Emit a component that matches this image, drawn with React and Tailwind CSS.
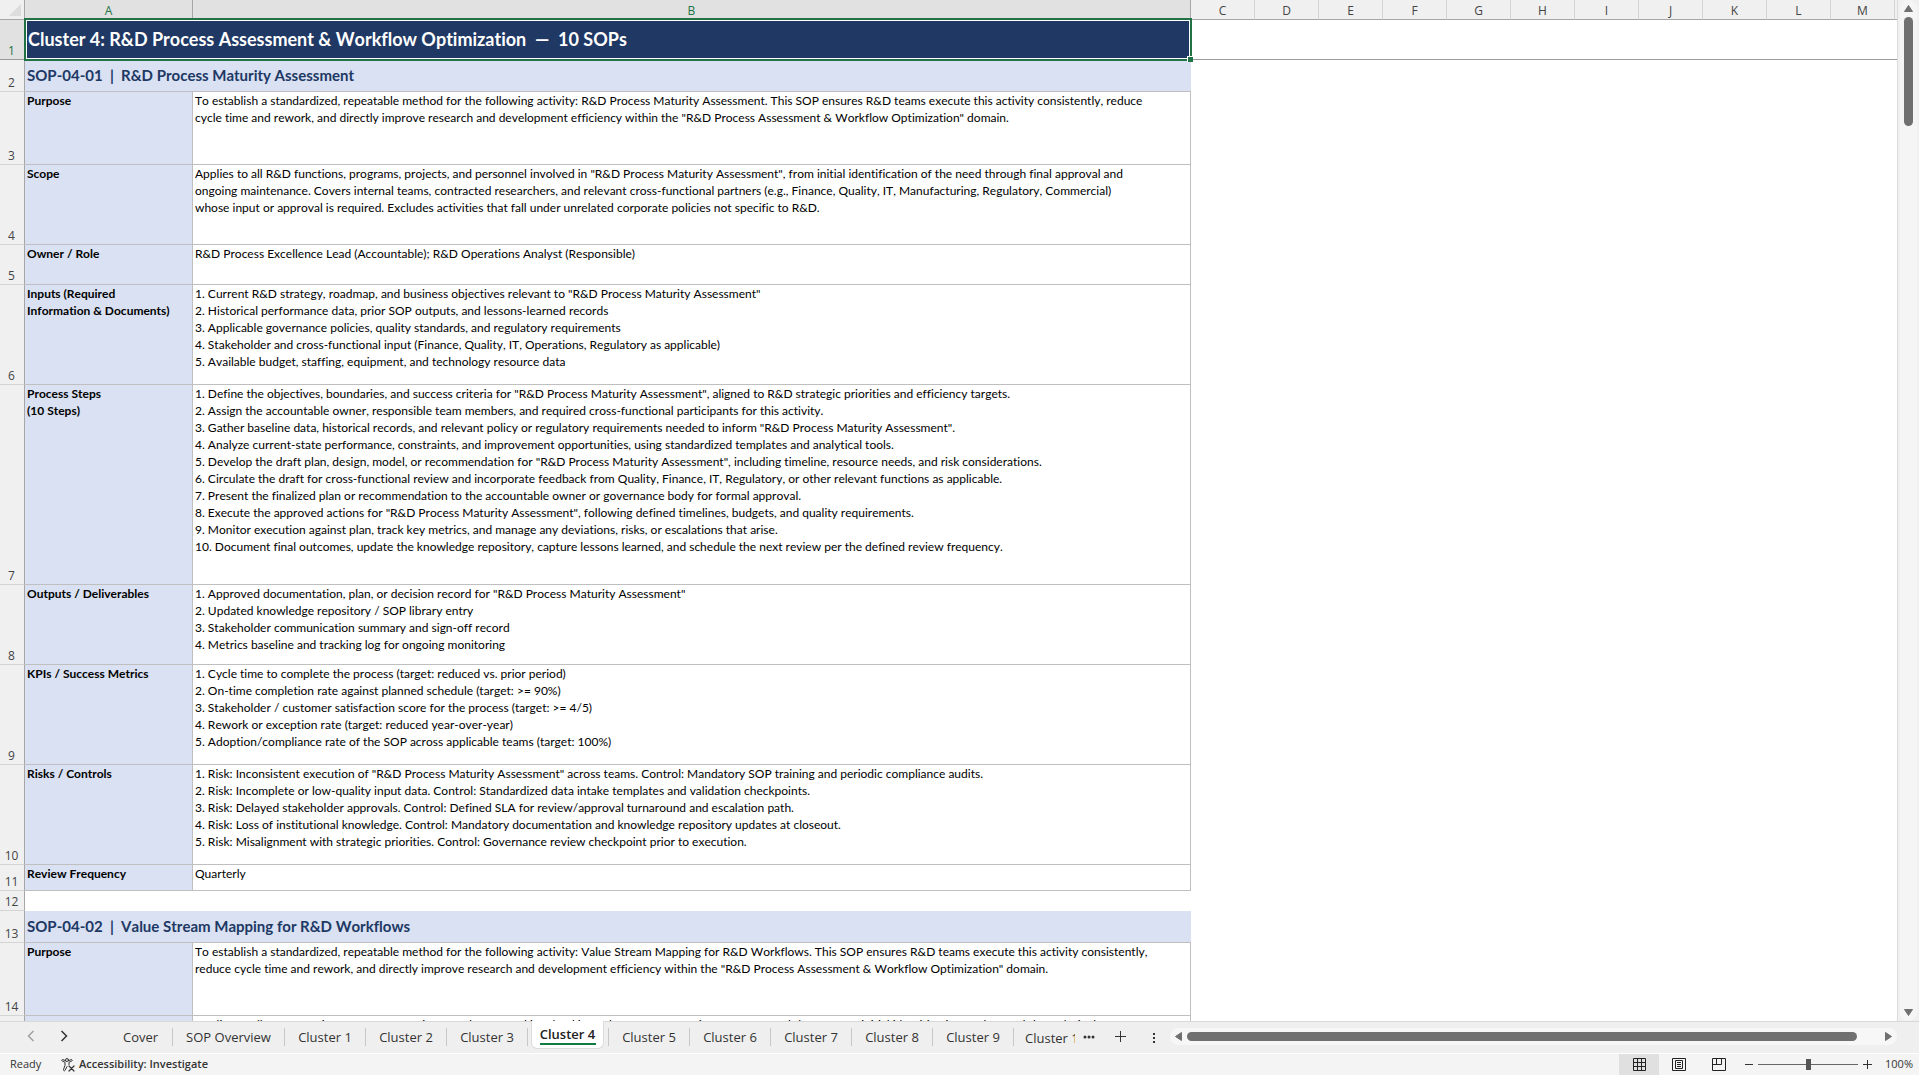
import { useState } from "react";

const extraColumns = ["C", "D", "E", "F", "G", "H", "I", "J", "K", "L", "M"];

const rows = [
  { type: "title", height: "h-10", text: "Cluster 4: R&D Process Assessment & Workflow Optimization  —  10 SOPs" },
  { type: "section", height: "h-8", text: "SOP-04-01  |  R&D Process Maturity Assessment" },
  {
    height: "h-[73px]",
    label: ["Purpose"],
    lines: [
      "To establish a standardized, repeatable method for the following activity: R&D Process Maturity Assessment. This SOP ensures R&D teams execute this activity consistently, reduce",
      'cycle time and rework, and directly improve research and development efficiency within the "R&D Process Assessment & Workflow Optimization" domain.',
    ],
  },
  {
    height: "h-20",
    label: ["Scope"],
    lines: [
      'Applies to all R&D functions, programs, projects, and personnel involved in "R&D Process Maturity Assessment", from initial identification of the need through final approval and',
      "ongoing maintenance. Covers internal teams, contracted researchers, and relevant cross-functional partners (e.g., Finance, Quality, IT, Manufacturing, Regulatory, Commercial)",
      "whose input or approval is required. Excludes activities that fall under unrelated corporate policies not specific to R&D.",
    ],
  },
  {
    height: "h-10",
    label: ["Owner / Role"],
    lines: ["R&D Process Excellence Lead (Accountable); R&D Operations Analyst (Responsible)"],
  },
  {
    height: "h-25",
    label: ["Inputs (Required", "Information & Documents)"],
    lines: [
      '1. Current R&D strategy, roadmap, and business objectives relevant to "R&D Process Maturity Assessment"',
      "2. Historical performance data, prior SOP outputs, and lessons-learned records",
      "3. Applicable governance policies, quality standards, and regulatory requirements",
      "4. Stakeholder and cross-functional input (Finance, Quality, IT, Operations, Regulatory as applicable)",
      "5. Available budget, staffing, equipment, and technology resource data",
    ],
  },
  {
    height: "h-50",
    label: ["Process Steps", "(10 Steps)"],
    lines: [
      '1. Define the objectives, boundaries, and success criteria for "R&D Process Maturity Assessment", aligned to R&D strategic priorities and efficiency targets.',
      "2. Assign the accountable owner, responsible team members, and required cross-functional participants for this activity.",
      '3. Gather baseline data, historical records, and relevant policy or regulatory requirements needed to inform "R&D Process Maturity Assessment".',
      "4. Analyze current-state performance, constraints, and improvement opportunities, using standardized templates and analytical tools.",
      '5. Develop the draft plan, design, model, or recommendation for "R&D Process Maturity Assessment", including timeline, resource needs, and risk considerations.',
      "6. Circulate the draft for cross-functional review and incorporate feedback from Quality, Finance, IT, Regulatory, or other relevant functions as applicable.",
      "7. Present the finalized plan or recommendation to the accountable owner or governance body for formal approval.",
      '8. Execute the approved actions for "R&D Process Maturity Assessment", following defined timelines, budgets, and quality requirements.',
      "9. Monitor execution against plan, track key metrics, and manage any deviations, risks, or escalations that arise.",
      "10. Document final outcomes, update the knowledge repository, capture lessons learned, and schedule the next review per the defined review frequency.",
    ],
  },
  {
    height: "h-20",
    label: ["Outputs / Deliverables"],
    lines: [
      '1. Approved documentation, plan, or decision record for "R&D Process Maturity Assessment"',
      "2. Updated knowledge repository / SOP library entry",
      "3. Stakeholder communication summary and sign-off record",
      "4. Metrics baseline and tracking log for ongoing monitoring",
    ],
  },
  {
    height: "h-25",
    label: ["KPIs / Success Metrics"],
    lines: [
      "1. Cycle time to complete the process (target: reduced vs. prior period)",
      "2. On-time completion rate against planned schedule (target: >= 90%)",
      "3. Stakeholder / customer satisfaction score for the process (target: >= 4/5)",
      "4. Rework or exception rate (target: reduced year-over-year)",
      "5. Adoption/compliance rate of the SOP across applicable teams (target: 100%)",
    ],
  },
  {
    height: "h-25",
    label: ["Risks / Controls"],
    lines: [
      '1. Risk: Inconsistent execution of "R&D Process Maturity Assessment" across teams. Control: Mandatory SOP training and periodic compliance audits.',
      "2. Risk: Incomplete or low-quality input data. Control: Standardized data intake templates and validation checkpoints.",
      "3. Risk: Delayed stakeholder approvals. Control: Defined SLA for review/approval turnaround and escalation path.",
      "4. Risk: Loss of institutional knowledge. Control: Mandatory documentation and knowledge repository updates at closeout.",
      "5. Risk: Misalignment with strategic priorities. Control: Governance review checkpoint prior to execution.",
    ],
  },
  { height: "h-[26px]", label: ["Review Frequency"], lines: ["Quarterly"] },
  { type: "blank", height: "h-5" },
  { type: "section", height: "h-8", text: "SOP-04-02  |  Value Stream Mapping for R&D Workflows" },
  {
    height: "h-[73px]",
    label: ["Purpose"],
    lines: [
      "To establish a standardized, repeatable method for the following activity: Value Stream Mapping for R&D Workflows. This SOP ensures R&D teams execute this activity consistently,",
      'reduce cycle time and rework, and directly improve research and development efficiency within the "R&D Process Assessment & Workflow Optimization" domain.',
    ],
  },
  {
    height: "h-20",
    label: ["Scope"],
    lines: [
      'Applies to all R&D functions, programs, projects, and personnel involved in "Value Stream Mapping for R&D Workflows", from initial identification of the need through final',
    ],
  },
];

const sheets = [
  "Cluster 1", "Cluster 2", "Cluster 3", "Cluster 4", "Cluster 5",
  "Cluster 6", "Cluster 7", "Cluster 8", "Cluster 9",
];

function Lines({ lines }) {
  return lines.map((line) => (
    <div key={line} className="whitespace-nowrap">{line}</div>
  ));
}

function RowHeader({ number, active }) {
  return (
    <th
      scope="row"
      className={`border-r border-r-[#a6a6a6] border-b p-0 pr-px text-center align-bottom font-['Open_Sans',sans-serif] text-xs leading-[17px] font-normal ${
        active ? "border-b-[#9a9a9a] bg-[#e1e1e1] text-[#217346]" : "border-b-[#d4d4d4] bg-[#f0f0f0] text-[#444]"
      }`}
    >
      {number}
    </th>
  );
}

function Row({ row, number }) {
  if (row.type === "title") {
    return (
      <tr className={row.height}>
        <RowHeader number={number} active />
        <td colSpan={2} className="relative border-b border-[#9a9a9a] bg-[#203864] p-0 pt-0.5 pl-[3px] align-middle">
          <span className="text-[18px] font-bold whitespace-pre text-white">{row.text}</span>
          {/* selected cell outline */}
          <div className="absolute -top-0.5 -right-px -bottom-0.5 -left-px z-10 border-2 border-[#217346]">
            <div className="h-full border border-white" />
            <div className="absolute -right-[3px] -bottom-[3px] size-1.5 border-t border-l border-white bg-[#217346]" />
          </div>
        </td>
        <td colSpan={12} className="border-b border-[#9a9a9a] p-0" />
      </tr>
    );
  }

  if (row.type === "section") {
    return (
      <tr className={row.height}>
        <RowHeader number={number} />
        <td colSpan={2} className="border-b border-[#bfbfbf] bg-[#d9e1f2] p-0 pl-0.5 align-middle">
          <span className="text-[15px] font-bold whitespace-pre text-[#203864]">{row.text}</span>
        </td>
        <td colSpan={12} className="p-0" />
      </tr>
    );
  }

  if (row.type === "blank") {
    return (
      <tr className={row.height}>
        <RowHeader number={number} />
        <td colSpan={14} className="p-0" />
      </tr>
    );
  }

  return (
    <tr className={row.height}>
      <RowHeader number={number} />
      <td className="border-r border-b border-[#bfbfbf] bg-[#d9e1f2] p-0 pl-0.5 align-top font-bold">
        <Lines lines={row.label} />
      </td>
      <td className="border-r border-b border-[#bfbfbf] p-0 pl-0.5 align-top">
        <Lines lines={row.lines} />
      </td>
      <td colSpan={12} className="p-0" />
    </tr>
  );
}

function Sheet() {
  return (
    <table className="w-full table-fixed border-separate border-spacing-0 font-[Lato,sans-serif] text-xs leading-[17px] text-black [font-kerning:none] [font-variant-ligatures:none]">
      <colgroup>
        <col className="w-[25px]" />
        <col className="w-[168px]" />
        <col className="w-[998px]" />
        {extraColumns.map((c) => (
          <col key={c} className="w-16" />
        ))}
        <col />
      </colgroup>
      <thead className="font-['Open_Sans',sans-serif] text-[#444]">
        <tr className="h-5">
          <th className="border-r border-b border-[#a6a6a6] bg-[#f0f0f0] p-0">
            <svg className="ml-auto block h-3 w-4" viewBox="0 0 16 12" aria-hidden="true">
              <path d="M13 0v12H1z" fill="#dcdcdc" />
            </svg>
          </th>
          {["A", "B"].map((c) => (
            <th key={c} scope="col" className="border-r border-b border-[#a6a6a6] bg-[#e1e1e1] p-0 pt-0.5 font-normal text-[#217346]">
              {c}
            </th>
          ))}
          {extraColumns.map((c) => (
            <th key={c} scope="col" className="border-r border-b border-r-[#d4d4d4] border-b-[#a6a6a6] bg-[#f0f0f0] p-0 pt-0.5 font-normal">
              {c}
            </th>
          ))}
          <td className="border-b border-[#a6a6a6] bg-[#f0f0f0] p-0" />
        </tr>
      </thead>
      <tbody>
        {rows.map((row, i) => (
          <Row key={i} row={row} number={i + 1} />
        ))}
      </tbody>
    </table>
  );
}

function VerticalScrollbar() {
  return (
    <div className="flex w-[22px] shrink-0 justify-center border-l border-[#dcdcdc] bg-[#f0f0f0]">
      <div className="flex w-[17px] flex-col items-center rounded-full bg-[#f5f5f5] py-[5px]">
        <button aria-label="Scroll up">
          <svg className="block h-[7px] w-[9px]" viewBox="0 0 9 7">
            <path d="M4.500 .5 8.500 6.500H.5z" fill="#707070" stroke="#707070" strokeLinejoin="round" />
          </svg>
        </button>
        <div className="mt-[5px] h-[109px] w-[9px] rounded-full bg-[#707070]" />
        <button aria-label="Scroll down" className="mt-auto">
          <svg className="block h-[7px] w-[9px]" viewBox="0 0 9 7">
            <path d="M4.500 6.500 .5 .5h8z" fill="#707070" stroke="#707070" strokeLinejoin="round" />
          </svg>
        </button>
      </div>
    </div>
  );
}

function HorizontalScrollbar() {
  return (
    <div className="mt-1.5 mr-[22px] flex h-[17px] flex-1 items-center rounded-full bg-[#f7f7f7] px-[5px]">
      <button aria-label="Scroll left">
        <svg className="block h-[9px] w-[7px]" viewBox="0 0 7 9">
          <path d="M.5 4.500 6.500 .5v8z" fill="#707070" stroke="#707070" strokeLinejoin="round" />
        </svg>
      </button>
      <div className="mr-7 ml-[5px] h-[9px] flex-1 rounded-full bg-[#707070]" />
      <button aria-label="Scroll right">
        <svg className="block h-[9px] w-[7px]" viewBox="0 0 7 9">
          <path d="M6.500 4.500 .5 .5v8z" fill="#707070" stroke="#707070" strokeLinejoin="round" />
        </svg>
      </button>
    </div>
  );
}

function SheetTabs() {
  const [active, setActive] = useState("Cluster 4");
  const tab = "mt-1.5 flex h-[18px] shrink-0 items-center justify-center border-r border-[#c8c8c8] pt-0.5";

  return (
    <nav className="flex h-8 shrink-0 border-t border-[#d8d8d8] bg-[#efefef] text-[13px] text-[#333]">
      <div className="flex w-[109px] shrink-0 items-start pt-2 pl-[27px]">
        <button aria-label="Previous sheet" className="mr-[25px]">
          <svg className="block h-3 w-2" viewBox="0 0 8 12" fill="none" stroke="#a0a0a0" strokeWidth="1.500">
            <path d="M6.500 1 1.500 6l5 5" />
          </svg>
        </button>
        <button aria-label="Next sheet">
          <svg className="block h-3 w-2" viewBox="0 0 8 12" fill="none" stroke="#333" strokeWidth="1.500">
            <path d="m1.500 1 5 5-5 5" />
          </svg>
        </button>
      </div>
      <button className={`${tab} w-16`}>Cover</button>
      <button className={`${tab} w-28`}>SOP Overview</button>
      {sheets.map((name) =>
        name === active ? (
          <div key={name} className="-mt-px flex w-[81px] shrink-0 pl-[3px]">
            <button className="flex h-7 w-[73px] flex-col items-center rounded-b-md border-x border-b border-[#dcdcdc] bg-white pt-1 font-semibold text-[#222]">
              <span className="leading-[18px]">{name}</span>
              <span className="h-0.5 w-14 bg-[#107c41]" />
            </button>
            <div className="mt-[7px] ml-1 h-[18px] w-px bg-[#c8c8c8]" />
          </div>
        ) : (
          <button key={name} onClick={() => setActive(name)} className={`${tab} w-[81px]`}>
            {name}
          </button>
        )
      )}
      <button className="mt-[7px] ml-[11px] h-[18px] w-[50px] shrink-0 overflow-hidden text-left leading-[18px] whitespace-nowrap">
        Cluster 10
      </button>
      <button aria-label="More sheets" className="mt-1.5 ml-2 h-[18px] shrink-0">
        <svg className="block h-1 w-3" viewBox="0 0 12 4" fill="#333">
          <circle cx="2" cy="2" r="1.500" />
          <circle cx="6" cy="2" r="1.500" />
          <circle cx="10" cy="2" r="1.500" />
        </svg>
      </button>
      <button aria-label="New sheet" className="mt-1.5 ml-5 h-[18px] shrink-0">
        <svg className="block size-3" viewBox="0 0 12 12" stroke="#333">
          <path d="M5.500 0v11M0 5.500h11" />
        </svg>
      </button>
      <button aria-label="Resize tab bar" className="mt-[7px] mr-[15px] ml-[26px] h-[18px] shrink-0">
        <svg className="block h-2.5 w-0.5" viewBox="0 0 2 10" fill="#333">
          <path d="M0 0h2v2H0zM0 4h2v2H0zM0 8h2v2H0z" />
        </svg>
      </button>
      <HorizontalScrollbar />
    </nav>
  );
}

function StatusBar() {
  const [zoom, setZoom] = useState(100);

  return (
    <footer className="flex h-[22px] shrink-0 items-center border-t border-white bg-[#f4f4f4] text-[11px] text-[#333]">
      <span className="ml-2.5 w-[51px]">Ready</span>
      <button className="flex items-center gap-1 font-semibold">
        <svg className="size-3.5" viewBox="0 0 14 14" fill="none" stroke="#333" strokeLinecap="round" strokeLinejoin="round">
          <circle cx="6" cy="2" r="1.500" />
          <path d="M4.500 2.700 1.800 1.600C.8 1.300.3 2.500 1.200 3L4 4.300v3L2.500 11.600c-.3 1.200 1.100 1.700 1.600.7L6 8.600" />
          <path d="m7.500 2.700 2.700-1.100c1-.3 1.500.9.6 1.400L8 4.300v2.200" />
          <path d="m8 8 5 5M13 8l-5 5" strokeWidth="1.200" />
        </svg>
        Accessibility: Investigate
      </button>
      <div className="ml-auto flex h-full items-center">
        <button aria-label="Normal view" className="flex h-full w-10 items-center justify-center bg-[#e0e0e0]">
          <svg className="size-[13px]" viewBox="0 0 13 13" fill="none" stroke="#222">
            <path d="M.5.5h12v12H.5zM4.500.5v12M8.500.5v12M.5 4.500h12M.5 8.500h12" />
          </svg>
        </button>
        <button aria-label="Page layout" className="flex h-full w-10 items-center justify-center">
          <svg className="h-[13px] w-3.5" viewBox="0 0 14 13" fill="none" stroke="#222">
            <path d="M.5.5h13v12H.5zM3.500 2.500h7v8h-7zM5 4.500h4M5 6.500h4M5 8.500h4" />
          </svg>
        </button>
        <button aria-label="Page break preview" className="flex h-full w-10 items-center justify-center">
          <svg className="h-[13px] w-3.5" viewBox="0 0 14 13" fill="none" stroke="#222">
            <path d="M.5.5h13v12H.5zM4.500.5v6M9.500.5v6M.5 6.500h9" />
          </svg>
        </button>
        <button aria-label="Zoom out" className="ml-1.5 w-[13px]">
          <svg className="block size-2" viewBox="0 0 8 8" stroke="#333">
            <path d="M0 3.500h8" />
          </svg>
        </button>
        <input
          type="range"
          aria-label="Zoom"
          min="0"
          max="200"
          value={zoom}
          onChange={(e) => setZoom(Number(e.target.value))}
          className="h-[11px] w-[100px] appearance-none bg-transparent [&::-webkit-slider-runnable-track]:h-px [&::-webkit-slider-runnable-track]:bg-[#666] [&::-webkit-slider-thumb]:-mt-[5px] [&::-webkit-slider-thumb]:h-[11px] [&::-webkit-slider-thumb]:w-[5px] [&::-webkit-slider-thumb]:appearance-none [&::-webkit-slider-thumb]:bg-[#555]"
        />
        <button aria-label="Zoom in" className="ml-[5px] w-[22px]">
          <svg className="block size-[9px]" viewBox="0 0 9 9" stroke="#333">
            <path d="M0 4.500h9M4.500 0v9" />
          </svg>
        </button>
        <span className="w-[34px]">{zoom}%</span>
      </div>
    </footer>
  );
}

export default function App() {
  return (
    <div className="flex h-screen flex-col overflow-hidden bg-white font-['Open_Sans',sans-serif]">
      <main className="flex min-h-0 flex-1">
        <div className="min-w-0 flex-1 overflow-hidden">
          <Sheet />
        </div>
        <VerticalScrollbar />
      </main>
      <SheetTabs />
      <StatusBar />
    </div>
  );
}
